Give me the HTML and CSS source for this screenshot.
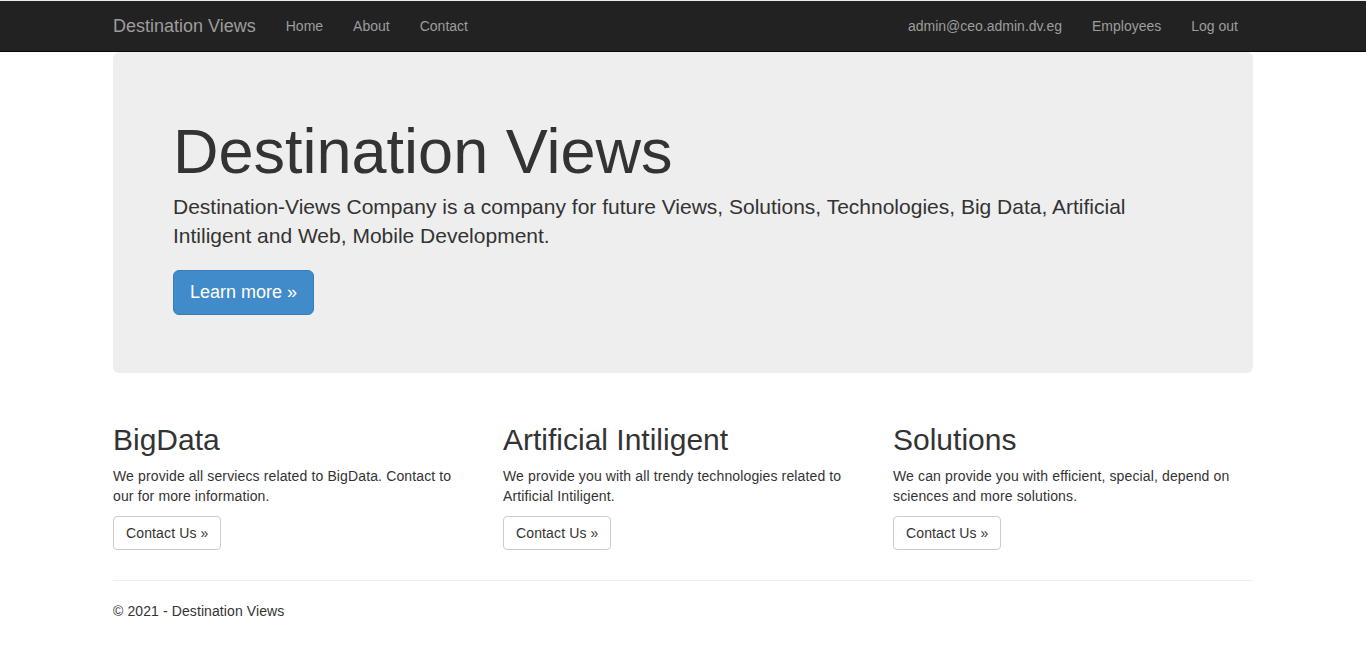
FILE: index.html
```html
<!DOCTYPE html>
<html lang="en">
<head>
<meta charset="utf-8">
<title>Home Page - Destination Views</title>
<link rel="stylesheet" href="styles.css">
</head>
<body>
<nav class="navbar">
  <div class="container nav-container">
    <div class="nav-left">
      <a class="brand" href="#">Destination Views</a>
      <ul class="nav">
        <li><a href="#">Home</a></li>
        <li><a href="#">About</a></li>
        <li><a href="#">Contact</a></li>
      </ul>
    </div>
    <ul class="nav nav-right">
      <li><a href="#">admin@ceo.admin.dv.eg</a></li>
      <li><a href="#">Employees</a></li>
      <li><a href="#">Log out</a></li>
    </ul>
  </div>
</nav>
<div class="container body-content">
  <div class="jumbotron">
    <h1>Destination Views</h1>
    <p class="lead">Destination-Views Company is a company for future Views, Solutions, Technologies, Big Data, Artificial Intiligent and Web, Mobile Development.</p>
    <p class="btn-line"><a href="#" class="btn btn-primary btn-lg">Learn more &raquo;</a></p>
  </div>
  <div class="row">
    <div class="col">
      <h2>BigData</h2>
      <p>We provide all serviecs related to BigData. Contact to our for more information.</p>
      <p><a class="btn btn-default" href="#">Contact Us &raquo;</a></p>
    </div>
    <div class="col">
      <h2>Artificial Intiligent</h2>
      <p>We provide you with all trendy technologies related to Artificial Intiligent.</p>
      <p><a class="btn btn-default" href="#">Contact Us &raquo;</a></p>
    </div>
    <div class="col">
      <h2>Solutions</h2>
      <p>We can provide you with efficient, special, depend on sciences and more solutions.</p>
      <p><a class="btn btn-default" href="#">Contact Us &raquo;</a></p>
    </div>
  </div>
  <hr class="rule">
  <footer>
    <p>&copy; 2021 - Destination Views</p>
  </footer>
</div>
</body>
</html>
```

FILE: styles.css
```css
* { box-sizing: border-box; }
html, body { margin: 0; }
body {
  font-family: "Liberation Sans", Arial, sans-serif;
  font-size: 14px;
  line-height: 1.42857143;
  color: #333;
  background: #fff;
  padding-top: 52px;
  padding-bottom: 20px;
}
a { text-decoration: none; }
.container {
  width: 1170px;
  margin: 0 auto;
  padding: 0 15px;
}
.navbar {
  position: fixed;
  top: 0;
  left: 0;
  right: 0;
  z-index: 10;
  height: 52px;
  background: #222;
  border-top: 1px solid #ececec;
  border-bottom: 1px solid #080808;
}
.nav-container {
  display: flex;
  justify-content: space-between;
  height: 50px;
}
.nav-left { display: flex; }
.brand {
  display: block;
  margin-left: -15px;
  padding: 15px;
  height: 50px;
  font-size: 18px;
  line-height: 20px;
  color: #9d9d9d;
}
.nav {
  display: flex;
  list-style: none;
  margin: 0;
  padding: 0;
}
.nav a {
  display: block;
  padding: 15px;
  line-height: 20px;
  color: #9d9d9d;
}
.jumbotron {
  background: #eee;
  border-radius: 6px;
  padding: 48px 60px;
  margin-bottom: 30px;
}
.jumbotron h1 {
  font-size: 63px;
  font-weight: 500;
  line-height: 1;
  margin: 20px 0 9px;
}
.jumbotron p {
  font-size: 21px;
  font-weight: 200;
  line-height: 1.4;
  margin: 0;
}
.jumbotron .btn-line {
  display: flex;
  margin: 19px 0 10px;
}
.btn {
  display: inline-block;
  border: 1px solid transparent;
  border-radius: 4px;
  font-weight: 400;
  white-space: nowrap;
}
.btn-primary {
  background: #428bca;
  border-color: #357ebd;
  color: #fff;
}
.btn-lg {
  padding: 10px 16px;
  font-size: 18px;
  line-height: 23px;
  border-radius: 6px;
}
.btn-default {
  background: #fff;
  border-color: #ccc;
  color: #333;
  padding: 6px 12px;
  font-size: 14px;
  line-height: 20px;
}
.row {
  display: flex;
  margin: 0 -15px;
}
.col {
  width: 390px;
  padding: 0 15px;
}
.col h2 {
  font-size: 30px;
  font-weight: 500;
  line-height: 1.1;
  margin: 20px 0 10px;
}
.col p { margin: 0 0 10px; letter-spacing: 0.13px; }
.rule {
  margin: 20px 0;
  border: 0;
  border-top: 1px solid #eee;
}
footer p { margin: 0 0 10px; letter-spacing: 0.1px; }
```
